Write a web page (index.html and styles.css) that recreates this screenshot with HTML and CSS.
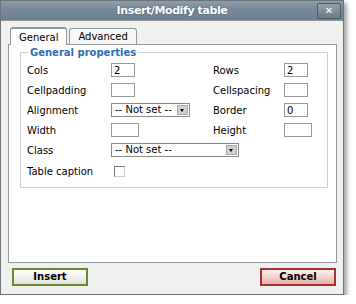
FILE: index.html
```html
<!DOCTYPE html>
<html lang="en">
<head>
    <meta charset="UTF-8">
    <title>Insert/Modify table</title>
    <link rel="stylesheet" href="styles.css">
</head>
<body>
    <div class="dialog">
        <div class="titlebar">
            <span class="title">Insert/Modify table</span>
            <span class="close">&#x2715;</span>
        </div>
        <div class="content">
            <div class="tabs">
                <span class="tab current">General</span>
                <span class="tab">Advanced</span>
            </div>
            <div class="panel">
                <fieldset class="props">
                    <legend>General properties</legend>
                    <div class="grid">
                        <label>Cols</label>
                        <div><input class="num" type="text" value="2"></div>
                        <label>Rows</label>
                        <div><input class="num" type="text" value="2"></div>

                        <label>Cellpadding</label>
                        <div><input class="num" type="text"></div>
                        <label>Cellspacing</label>
                        <div><input class="num" type="text"></div>

                        <label>Alignment</label>
                        <div><span class="select short">-- Not set --<span class="arrow"></span></span></div>
                        <label>Border</label>
                        <div><input class="num" type="text" value="0"></div>

                        <label>Width</label>
                        <div><input class="size" type="text"></div>
                        <label>Height</label>
                        <div><input class="size" type="text"></div>

                        <label>Class</label>
                        <div class="wide"><span class="select long">-- Not set --<span class="arrow"></span></span></div>

                        <label>Table caption</label>
                        <div class="wide"><span class="check"></span></div>
                    </div>
                </fieldset>
            </div>
            <div class="buttons">
                <span class="btn insert">Insert</span>
                <span class="btn cancel">Cancel</span>
            </div>
        </div>
    </div>
</body>
</html>
```

FILE: styles.css
```css
body { margin:0; background:#fff; font-family:"DejaVu Sans", Verdana, sans-serif; font-size:10px; color:#000; }
.dialog { width:342px; height:293px; border:1px solid #6d7478; background:#f0f0ee;
    box-shadow:3px 3px 4px rgba(0,0,0,0.35); }
.titlebar { height:19px; background:linear-gradient(#8e9daa, #75879a 50%, #6f808d); display:flex;
    align-items:center; justify-content:center; position:relative; border-bottom:1px solid #8a969e; }
.title { color:#fff; font-family:Tahoma, "DejaVu Sans", sans-serif; font-weight:bold; font-size:11px;
    text-shadow:0 0 2px #4a5a66; letter-spacing:-0.4px; }
.close { position:absolute; right:2px; top:2px; width:22px; height:14px; border:1px solid #4e5c66;
    border-radius:2px; background:linear-gradient(#94a2ad, #6a7a86); color:#fff; font-size:10px;
    font-weight:bold; text-align:center; line-height:14px; }
.content { padding:4px 6px 0 7px; }
.tabs { display:flex; align-items:flex-end; height:19px; padding-left:2px; }
.tab { height:15px; line-height:15px; padding:0 8px; border:1px solid #919b9c; border-bottom:0;
    border-radius:3px 3px 0 0; background:#f7f7f5; margin-right:2px; }
.tab.current { line-height:18px; background:#fff; position:relative; top:1px;
    border-top:2px solid #919b9c; height:16px; }
.panel { height:215px; background:#fff; border:1px solid #919b9c; padding:2px 8px 0 11px; }
.props { margin:0; padding:2px 0 4px 6px; border:1px solid #d0d0d0; height:133px; }
.props legend { color:#2b6fb6; font-weight:bold; padding:0 2px; margin-left:1px; font-size:10px; }
.grid { display:grid; grid-template-columns:84px 102px 71px 1fr; grid-template-rows:repeat(5, 20px) 23px;
    align-items:center; }
.grid label { white-space:nowrap; }
.wide { grid-column:2 / 5; }
input { font-family:"DejaVu Sans", Verdana, sans-serif; font-size:10px; height:14px; box-sizing:border-box;
    border:1px solid #999; padding:0 2px; margin:0; display:block; }
.num { width:24px; }
.size { width:28px; }
.select { display:flex; align-items:center; height:14px; box-sizing:border-box; border:1px solid #8a8a8a;
    padding-left:3px; justify-content:space-between; white-space:nowrap; line-height:12px; }
.short { width:79px; }
.long { width:128px; }
.arrow { width:11px; height:10px; margin-right:1px; background:#d4d0c8; border:1px solid #aaa;
    box-sizing:border-box; position:relative; }
.arrow::after { content:""; position:absolute; left:2px; top:3px; border:2px solid transparent;
    border-top:3px solid #000; }
.check { display:block; width:11px; height:11px; box-sizing:border-box; border:1px solid #777;
    border-right-color:#ccc; border-bottom-color:#ccc; margin-left:3px; }
.buttons { display:flex; justify-content:space-between; padding:5px 1px 0 4px; }
.btn { width:76px; height:18px; box-sizing:border-box; font-weight:bold; text-align:center; line-height:14px;
    font-size:10px; }
.insert { border:2px solid #6b8a2e; background:linear-gradient(#fff, #e2e2dc); }
.cancel { border:2px solid #a6312e; background:linear-gradient(#fff3f1, #e8b1aa); }
```
